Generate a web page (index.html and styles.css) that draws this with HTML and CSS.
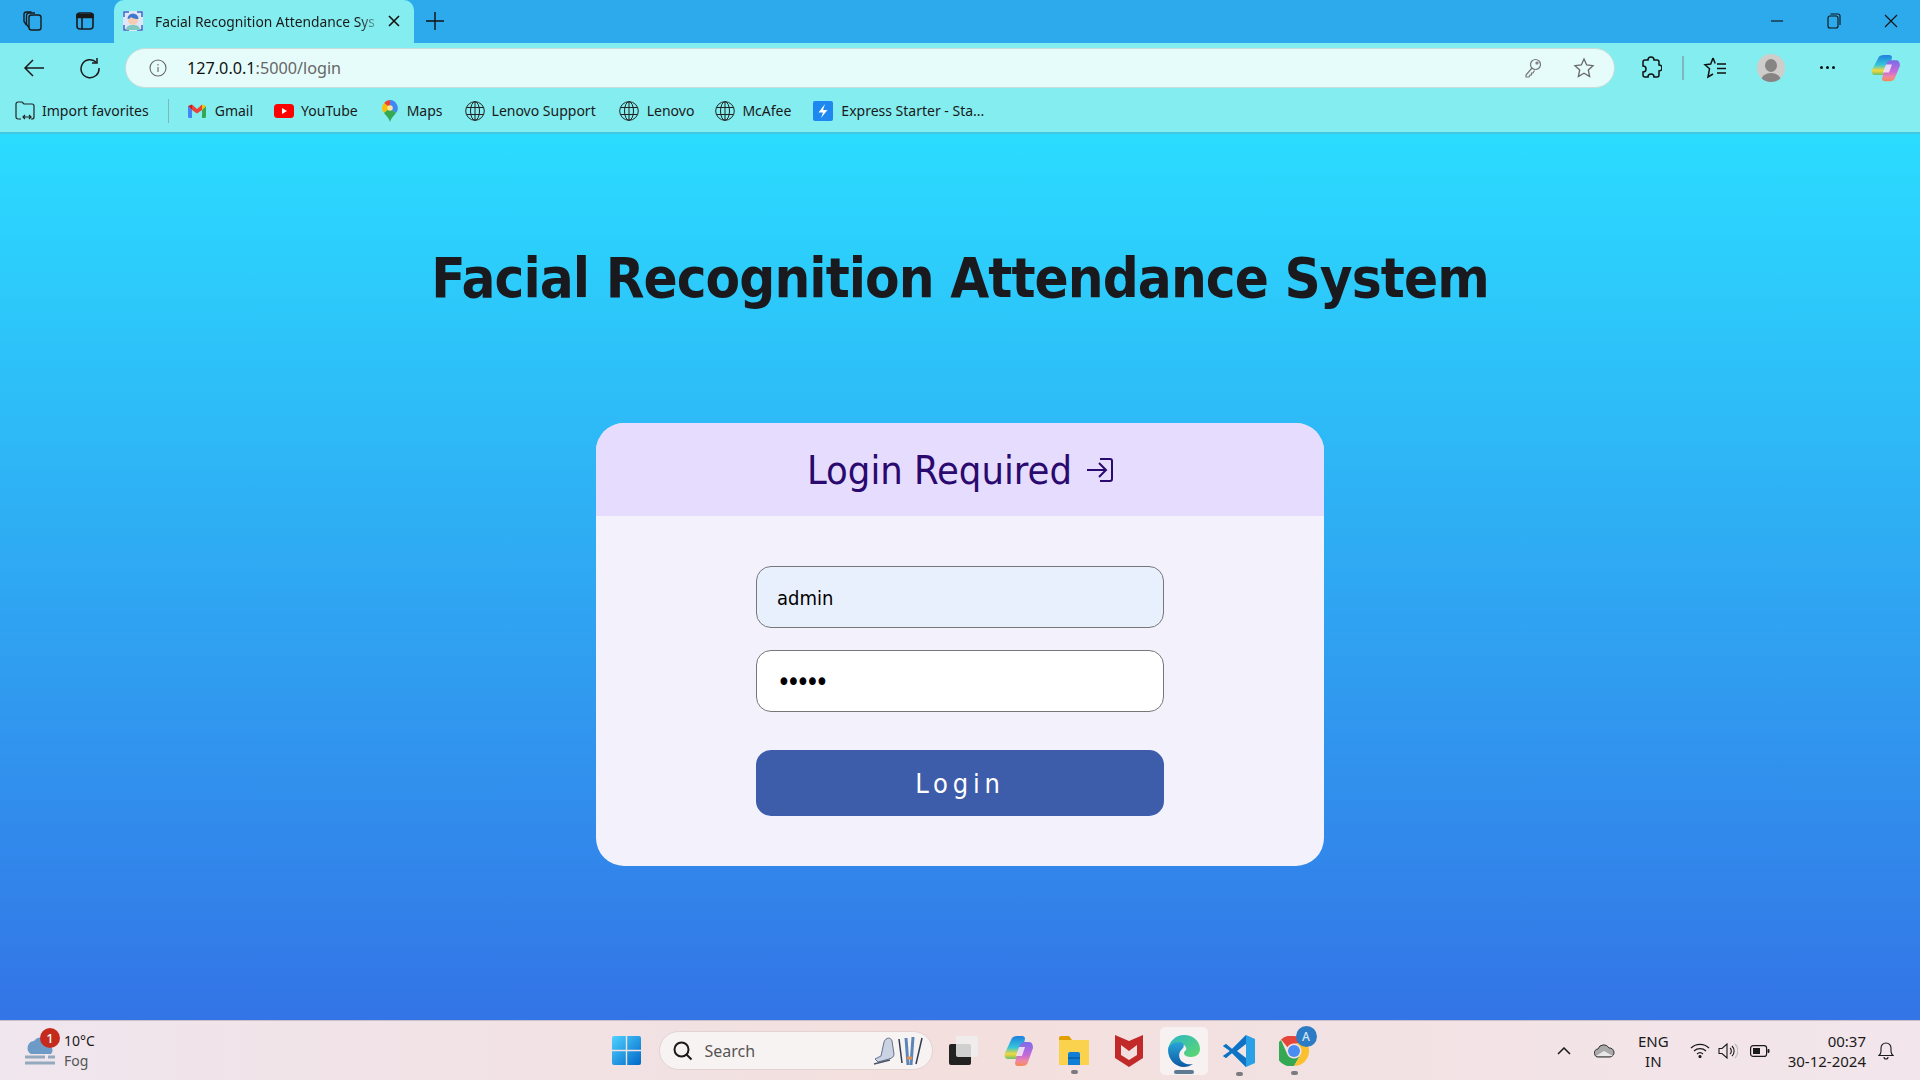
FILE: index.html
```html
<!DOCTYPE html>
<html lang="en">
<head>
  <meta charset="UTF-8">
  <title>Facial Recognition Attendance System</title>
  <link rel="stylesheet" href="styles.css">
</head>
<body>
  <div class="tabstrip">
    <div class="strip-icons">
      <svg class="ic" width="22" height="22" viewBox="0 0 22 22" fill="none" stroke="#1a1a1a" stroke-width="1.4"><rect x="8" y="5" width="12" height="15" rx="2.5"/><path d="M8 17.500 5.500 14.500V5.500A2.500 2.500 0 0 1 8 3h6"/><path d="M5.500 15 3 11.500V4.500A2.500 2.500 0 0 1 5.500 2h5"/></svg>
      <svg class="ic" width="22" height="22" viewBox="0 0 22 22" fill="none" stroke="#1a1a1a" stroke-width="1.6"><rect x="3" y="3" width="16" height="16" rx="3"/><path d="M3 4.500h16v3H3z" fill="#1a1a1a"/><path d="M8 7v12"/></svg>
    </div>
    <div class="tab">
      <svg class="favicon" width="20" height="20" viewBox="0 0 20 20" fill="none"><rect width="20" height="20" fill="#dfe6f8"/><path d="M1 6V1h5M14 1h5v5M19 14v5h-5M6 19H1v-5" stroke="#3f64c8" stroke-width="1.500"/><circle cx="10" cy="9" r="5" fill="#f4cdb4"/><path d="M4.500 8a5.500 5.500 0 0 1 11 0c-3 0-6-.5-7.500-2-.5 1-2 2-3.500 2z" fill="#3f78cc"/><path d="M3 19c0-4 3-5 7-5s7 1 7 5z" fill="#7fc9c0"/></svg>
      <span class="tab-title">Facial Recognition Attendance Sys</span>
      <svg width="14" height="14" viewBox="0 0 14 14" stroke="#111" stroke-width="1.6"><path d="M2 2l10 10M12 2 2 12"/></svg>
    </div>
    <svg class="newtab" width="20" height="20" viewBox="0 0 20 20" stroke="#111" stroke-width="1.4"><path d="M10 1v18M1 10h18"/></svg>
    <div class="winctl">
      <svg width="14" height="14" viewBox="0 0 14 14" stroke="#111" stroke-width="1.1"><path d="M1 7h12"/></svg>
      <svg width="14" height="16" viewBox="0 0 14 16" fill="none" stroke="#111" stroke-width="1.1"><rect x="1" y="3" width="10" height="12" rx="2"/><path d="M3.500 1H11a2 2 0 0 1 2 2v9"/></svg>
      <svg width="14" height="14" viewBox="0 0 14 14" stroke="#111" stroke-width="1.1"><path d="M1 1l12 12M13 1 1 13"/></svg>
    </div>
  </div>

  <div class="toolbar">
    <svg class="tb-back" width="22" height="20" viewBox="0 0 22 20" fill="none" stroke="#1a1a1a" stroke-width="1.5"><path d="M21 10H2M10 2l-8 8 8 8"/></svg>
    <svg class="tb-reload" width="22" height="22" viewBox="0 0 22 22" fill="none" stroke="#1a1a1a" stroke-width="1.5"><path d="M17.500 5.500A9 9 0 1 0 20 11"/><path d="M18 1v5h-5"/></svg>
    <div class="addressbar">
      <svg width="18" height="18" viewBox="0 0 18 18" fill="none" stroke="#666" stroke-width="1.1"><circle cx="9" cy="9" r="8"/><path d="M9 8v5M9 5v1.400"/></svg>
      <span class="url"><b>127.0.0.1</b>:5000/login</span>
      <svg class="addr-key" width="18" height="20" viewBox="0 0 18 20" fill="none" stroke="#777" stroke-width="1.2"><circle cx="11.500" cy="6.500" r="5"/><path d="M8 10 2 17v2h3l1-2h1.500v-2h1.500l1.500-2.500"/><circle cx="13" cy="5" r="1"/></svg>
      <svg class="addr-star" width="22" height="22" viewBox="0 0 22 22" fill="none" stroke="#666" stroke-width="1.3"><path d="M11 2l2.700 6 6.300.7-4.700 4.300 1.300 6.500L11 16.200 5.400 19.500 6.700 13 2 8.700 8.300 8z"/></svg>
    </div>
    <svg class="tb-ext" width="22" height="24" viewBox="0 0 22 24" fill="none" stroke="#111" stroke-width="1.5"><path d="M8 4a3 3 0 0 1 6 0h3a2 2 0 0 1 2 2v3a3 3 0 0 1 0 6v4a2 2 0 0 1-2 2h-3a3 3 0 0 0-6 0H5a2 2 0 0 1-2-2v-3a3 3 0 0 0 0-6V6a2 2 0 0 1 2-2z"/></svg>
    <span class="tb-sep"></span>
    <svg class="tb-favs" width="24" height="24" viewBox="0 0 24 24" fill="none" stroke="#111" stroke-width="1.5"><path d="M10 2 7.700 8 2 8.800l4.500 4L5 21l5-3M10 2l2.200 5.500"/><path d="M14 8h9M14 12.500h9M14 17h9"/></svg>
    <span class="avatar"><i class="avatar-head"></i><i class="avatar-body"></i></span>
    <span class="tb-dots"><i></i><i></i><i></i></span>
    <svg class="tb-copilot" width="30" height="28" viewBox="0 0 30 32" preserveAspectRatio="none">
      <defs>
        <linearGradient id="cpa" x1="0" y1="0" x2="0" y2="1"><stop offset="0" stop-color="#1f7fe0"/><stop offset=".5" stop-color="#34c6d8"/><stop offset=".78" stop-color="#f4d83c"/><stop offset="1" stop-color="#6cc070"/></linearGradient>
        <linearGradient id="cpb" x1="0" y1="0" x2="0" y2="1"><stop offset="0" stop-color="#7a6bea"/><stop offset=".55" stop-color="#c66ad8"/><stop offset=".8" stop-color="#f088a0"/><stop offset="1" stop-color="#f48a50"/></linearGradient>
      </defs>
      <path d="M13 1h5c2 0 3 1 3 3l-4 17c-.6 2-2 3-4 3H4c-3 0-4-3-3-6l6-13c1-3 3-4 6-4z" fill="url(#cpa)"/>
      <path d="M21 7h4c3 0 4 3 4 6l-5 14c-1 3-3 4-6 4h-4c-2 0-3-1-3-3l4-16c.6-3 3-5 6-5z" fill="url(#cpb)"/>
      <path d="M15 12h6l-3 9h-6z" fill="#fff" opacity=".75"/>
    </svg>
  </div>

  <div class="favbar">
    <span class="fav fav-import">
      <svg width="21" height="20" viewBox="0 0 21 20" fill="none" stroke="#222" stroke-width="1.2"><path d="M6 18H3a2 2 0 0 1-2-2V3a2 2 0 0 1 2-2h4l2 2h8a2 2 0 0 1 2 2v11a2 2 0 0 1-2 2h-1"/><path d="M8 16h8M10 14l-2 2 2 2M14 14l2 2-2 2"/></svg>
      Import favorites
    </span>
    <span class="fav-sep"></span>
    <span class="fav fav-gmail">
      <svg width="18" height="14" viewBox="0 0 18 14"><path d="M0 2v10.500A1.500 1.500 0 0 0 1.500 14H4V6z" fill="#4285f4"/><path d="M18 2v10.500a1.500 1.500 0 0 1-1.500 1.500H14V6z" fill="#34a853"/><path d="M0 2 4 .5V6z" fill="#c5221f"/><path d="M4 .5 9 5l5-4.500V6L9 9.500 4 6z" fill="#ea4335"/><path d="M14 .5 18 2l-4 4z" fill="#fbbc04"/></svg>
      Gmail
    </span>
    <span class="fav fav-yt">
      <svg width="20" height="14" viewBox="0 0 20 14"><rect width="20" height="14" rx="3.500" fill="#f00"/><path d="M8 4l5 3-5 3z" fill="#fff"/></svg>
      YouTube
    </span>
    <span class="fav fav-maps">
      <svg width="16" height="22" viewBox="0 0 16 22"><path d="M8 0a8 8 0 0 1 6 13L8 8z" fill="#4285f4"/><path d="M8 0a8 8 0 0 0-6 3l6 5z" fill="#ea4335"/><path d="M2 3a8 8 0 0 0 0 10l6-5z" fill="#fbbc04"/><path d="M2 13l6-5 6 5c-2 2.500-5 5-6 9-1-4-4-6.500-6-9z" fill="#34a853"/><circle cx="8" cy="8" r="2.800" fill="#f6e7a0"/></svg>
      Maps
    </span>
    <span class="fav fav-lensup">
      <svg width="20" height="20" viewBox="0 0 20 20" fill="none" stroke="#222" stroke-width="1"><circle cx="10" cy="10" r="9.300"/><ellipse cx="10" cy="10" rx="4.500" ry="9.300"/><path d="M1.500 6.500h17M1.500 13.500h17M10 .7v18.600"/></svg>
      Lenovo Support
    </span>
    <span class="fav fav-len">
      <svg width="20" height="20" viewBox="0 0 20 20" fill="none" stroke="#222" stroke-width="1"><circle cx="10" cy="10" r="9.300"/><ellipse cx="10" cy="10" rx="4.500" ry="9.300"/><path d="M1.500 6.500h17M1.500 13.500h17M10 .7v18.600"/></svg>
      Lenovo
    </span>
    <span class="fav fav-mca">
      <svg width="20" height="20" viewBox="0 0 20 20" fill="none" stroke="#222" stroke-width="1"><circle cx="10" cy="10" r="9.300"/><ellipse cx="10" cy="10" rx="4.500" ry="9.300"/><path d="M1.500 6.500h17M1.500 13.500h17M10 .7v18.600"/></svg>
      McAfee
    </span>
    <span class="fav fav-exp">
      <svg width="20" height="20" viewBox="0 0 20 20"><rect width="20" height="20" rx="2" fill="#1e88f0"/><path d="M12 3 5.500 11.500H10L8 17l6.500-8H10z" fill="#fff"/></svg>
      Express Starter - Sta...
    </span>
  </div>

  <main class="page">
    <h1 class="page-title">Facial Recognition Attendance System</h1>
    <section class="card">
      <div class="card-head">
        <h2 class="card-title">Login Required</h2>
        <svg width="26" height="24" viewBox="0 0 26 24" fill="none" stroke="#2a0a6e" stroke-width="2"><path d="M13 1h10a2 2 0 0 1 2 2v18a2 2 0 0 1-2 2H13"/><path d="M0 12h18M12 5l7 7-7 7"/></svg>
      </div>
      <form class="card-form">
        <input class="field field-user" type="text" value="admin">
        <input class="field field-pass" type="password" value="admin">
        <button class="btn-login" type="button">Login</button>
      </form>
    </section>
  </main>

  <footer class="taskbar">
    <div class="weather">
      <span class="weather-icon">
        <svg width="32" height="32" viewBox="0 0 32 32"><path d="M7 19a7 7 0 0 1 3-13 9 9 0 0 1 16 5 5 5 0 0 1 1 8z" fill="#6d9ac6"/><path d="M1 22h20M24 22h7" stroke="#94a9be" stroke-width="3"/><path d="M1 28h30" stroke="#94a9be" stroke-width="3"/></svg>
        <b class="weather-badge">1</b>
      </span>
      <div class="weather-text"><span>10°C</span><span class="muted">Fog</span></div>
    </div>

    <div class="task-center">
      <svg class="task-start" width="29" height="29" viewBox="0 0 29 29">
        <defs><linearGradient id="win" x1="0" y1="0" x2="1" y2="1"><stop offset="0" stop-color="#4fd2ff"/><stop offset="1" stop-color="#0067c8"/></linearGradient></defs>
        <path d="M2 0h11.800v13.800H0V2a2 2 0 0 1 2-2zM15.200 0H27a2 2 0 0 1 2 2v11.800H15.200zM0 15.200h13.800V29H2a2 2 0 0 1-2-2zM15.200 15.200H29V27a2 2 0 0 1-2 2H15.200z" fill="url(#win)"/>
      </svg>
      <div class="task-search">
        <svg width="20" height="20" viewBox="0 0 20 20" fill="none" stroke="#1a1a1a" stroke-width="2"><circle cx="8.500" cy="8.500" r="7"/><path d="M13.500 13.500l5 5"/></svg>
        <span class="search-label">Search</span>
        <svg class="search-pic" width="52" height="34" viewBox="0 0 52 34" fill="none"><path d="M3 25l6-3 3-14c2-5 7-5 8-1l2 13c0 3-2 4-5 5l-11 3z" fill="#c9d3e4" stroke="#66718a"/><path d="M2 30l16-4" stroke="#4a5468" stroke-width="1.500"/><path d="M27 5l3 24" stroke="#333d52" stroke-width="1.500"/><path d="M34 4l2 27" stroke="#5d86b8" stroke-width="3"/><path d="M41 3l-2 28" stroke="#5d86b8" stroke-width="3"/><path d="M50 4l-6 26" stroke="#333d52" stroke-width="1.500"/><path d="M35 24h5" stroke="#e09050" stroke-width="3"/></svg>
      </div>
      <span class="task-view"><i class="tv-back"></i><i class="tv-front"></i></span>
      <svg class="task-app app-copilot" width="30" height="32" viewBox="0 0 30 32">
        <path d="M13 1h5c2 0 3 1 3 3l-4 17c-.6 2-2 3-4 3H4c-3 0-4-3-3-6l6-13c1-3 3-4 6-4z" fill="url(#cpa)"/>
        <path d="M21 7h4c3 0 4 3 4 6l-5 14c-1 3-3 4-6 4h-4c-2 0-3-1-3-3l4-16c.6-3 3-5 6-5z" fill="url(#cpb)"/>
        <path d="M15 12h6l-3 9h-6z" fill="#fff" opacity=".75"/>
      </svg>
      <span class="task-app app-files">
        <svg width="30" height="29" viewBox="0 0 30 29"><path d="M0 2a2 2 0 0 1 2-2h8l3 4h-13z" fill="#e0a000"/><path d="M0 4h30v25H0z" fill="#fbd24e"/><path d="M9 18a2 2 0 0 1 2-2h8a2 2 0 0 1 2 2v11H9z" fill="#0f7ed6"/><path d="M9 22h12" stroke="#0a5ca0" stroke-width="1.500"/></svg>
        <i class="run-dot"></i>
      </span>
      <svg class="task-app app-mcafee" width="28" height="32" viewBox="0 0 28 32"><path d="M0 0l14 6 14-6v23L14 32 0 23z" fill="#c22a2a"/><path d="M6 10l8 6 8-6v10l-8 5-8-5z" fill="#f3dfdd"/></svg>
      <span class="task-active">
        <svg width="32" height="32" viewBox="0 0 32 32">
          <defs>
            <linearGradient id="edb" x1="0" y1="0" x2="0" y2="1"><stop offset="0" stop-color="#2ba6d8"/><stop offset="1" stop-color="#0c59a4"/></linearGradient>
            <linearGradient id="edg" x1="0" y1="0" x2="1" y2="1"><stop offset="0" stop-color="#2bb6c8"/><stop offset="1" stop-color="#5fd86c"/></linearGradient>
          </defs>
          <path d="M0 15C1 6 8 0 16 0c9 0 16 6 16 14 0 5-4 8-9 8-3 0-7-1-7-4 0-1 1-2 2-3 1-2-1-6-6-6-6 0-12 3-12 6z" fill="url(#edg)"/>
          <path d="M0 15c0-5 6-8 11-8 4 0 6 3 4 6-3 3-5 6-3 11 2 4 7 6 13 5-3 2-6 3-9 3C7 32 0 24 0 15z" fill="url(#edb)"/>
        </svg>
        <i class="run-bar"></i>
      </span>
      <span class="task-app app-code">
        <svg width="32" height="32" viewBox="0 0 32 32"><path d="M23 0l9 4v24l-9 4L9 18l-6 5-3-2 7-5-7-5 3-2 6 5z" fill="#2aa0e6"/><path d="M23 0v32L9 18l-6 5-3-2 7-5-7-5 3-2 6 5z" fill="#0f72c4"/><path d="M23 9v14l-9-7z" fill="#f0e6e6"/></svg>
        <i class="run-dot"></i>
      </span>
      <span class="task-app app-chrome">
        <svg width="30" height="30" viewBox="0 0 30 30"><path d="M15 0a15 15 0 0 1 13 7.500H15a7.500 7.500 0 0 0-6.500 3.700L2 3.500A15 15 0 0 1 15 0z" fill="#e6463a"/><path d="M2 4A15 15 0 0 0 15 30l6.500-11.300a7.500 7.500 0 0 1-13 0z" fill="#34a853"/><path d="M28 7.500A15 15 0 0 1 15 30l6.500-11.300A7.500 7.500 0 0 0 15 7.500z" fill="#fbc02d"/><circle cx="15" cy="15" r="6" fill="#4a8df0"/></svg>
        <b class="chrome-badge">A</b>
        <i class="run-dot"></i>
      </span>
    </div>

    <div class="tray">
      <svg class="tray-chevron" width="14" height="8" viewBox="0 0 14 8" fill="none" stroke="#1a1a1a" stroke-width="1.500"><path d="M1 7l6-6 6 6"/></svg>
      <svg class="tray-cloud" width="21" height="15" viewBox="0 0 21 15"><path d="M5 14a4 4 0 0 1-1-8 6 6 0 0 1 11-1 4.500 4.500 0 0 1 1 9z" fill="#a9a9a9" stroke="#333"/><path d="M2 13l8-5 9 5z" fill="#e8e8e8"/></svg>
      <div class="tray-lang"><span>ENG</span><span>IN</span></div>
      <svg class="tray-wifi" width="20" height="15" viewBox="0 0 20 15" fill="none" stroke="#1a1a1a" stroke-width="1.200"><path d="M1 5a13 13 0 0 1 18 0M4 8a9 9 0 0 1 12 0M7 11a4.500 4.500 0 0 1 6 0"/><circle cx="10" cy="13.500" r="1" fill="#1a1a1a"/></svg>
      <svg class="tray-vol" width="20" height="16" viewBox="0 0 20 16" fill="none" stroke="#1a1a1a" stroke-width="1.100"><path d="M1 5.500h3L9 1v14l-5-4.500H1z"/><path d="M12 5a4 4 0 0 1 0 6M14 3a7 7 0 0 1 0 10"/><path d="M17 1a10 10 0 0 1 0 14" stroke="#bbb"/></svg>
      <svg class="tray-bat" width="20" height="12" viewBox="0 0 20 12"><rect x=".6" y=".6" width="16" height="10.800" rx="2.500" fill="none" stroke="#1a1a1a" stroke-width="1.200"/><rect x="3" y="3" width="7" height="6" fill="#1a1a1a"/><rect x="17.500" y="4" width="2" height="4" rx="1" fill="#1a1a1a"/></svg>
      <div class="tray-clock"><span>00:37</span><span>30-12-2024</span></div>
      <svg class="tray-bell" width="16" height="18" viewBox="0 0 16 18" fill="none" stroke="#1a1a1a" stroke-width="1.100"><path d="M1 13.500c1-1 2-2 2-4V6a5 5 0 0 1 10 0v3.500c0 2 1 3 2 4z"/><path d="M6 15a2 2 0 0 0 4 0"/></svg>
    </div>
  </footer>
</body>
</html>
```

FILE: styles.css
```css
* {
  box-sizing: border-box;
}

html, body {
  margin: 0;
  height: 100%;
  overflow: hidden;
}

body {
  display: flex;
  flex-direction: column;
  width: 1920px;
  height: 1080px;
  font-family: "Noto Sans", "Open Sans", sans-serif;
  color: #1a1a1a;
}

svg {
  display: block;
  flex: none;
}

/* browser chrome */
.tabstrip {
  display: flex;
  align-items: flex-start;
  height: 43px;
  background: #2caaec;
  flex: none;
}

.strip-icons {
  display: flex;
  gap: 31px;
  padding: 10px 0 0 21px;
  width: 114px;
}

.tab {
  display: flex;
  align-items: center;
  width: 300px;
  height: 43px;
  padding: 0 13px 1px 9px;
  background: #84edf0;
  border-radius: 10px 10px 0 0;
}

.tab-title {
  flex: 1;
  margin-left: 12px;
  font-size: 13.8px;
  white-space: nowrap;
  overflow: hidden;
  -webkit-mask-image: linear-gradient(90deg, #000 88%, transparent 98%);
}

.newtab {
  margin: 11px 0 0 11px;
}

.winctl {
  display: flex;
  align-items: center;
  gap: 43px;
  margin-left: auto;
  padding: 13px 22px 0 0;
}

.toolbar {
  display: flex;
  align-items: center;
  height: 46px;
  padding-top: 3px;
  background: #84edf0;
  flex: none;
}

.tb-back {
  margin-left: 23px;
}

.tb-reload {
  margin-left: 34px;
}

.addressbar {
  display: flex;
  align-items: center;
  width: 1490px;
  height: 40px;
  margin-left: 24px;
  padding: 0 19px 0 23px;
  background: #e6fcfb;
  border: 1px solid #c8dcdc;
  border-radius: 20px;
}

.url {
  margin-left: 20px;
  font-size: 16.2px;
  color: #666;
}

.url b {
  font-weight: 400;
  color: #111;
}

.addr-key {
  margin-left: auto;
}

.addr-star {
  margin-left: 31px;
}

.tb-ext {
  margin-left: 25px;
}

.tb-sep {
  width: 2px;
  height: 24px;
  margin-left: 20px;
  background: #7fb6bb;
}

.tb-favs {
  margin-left: 19px;
}

.avatar {
  position: relative;
  width: 28px;
  height: 28px;
  margin-left: 30px;
  border-radius: 50%;
  background: #cfcdca;
  overflow: hidden;
  flex: none;
}

.avatar-head {
  position: absolute;
  left: 8px;
  top: 5px;
  width: 12px;
  height: 13px;
  border-radius: 50%;
  background: #868583;
}

.avatar-body {
  position: absolute;
  left: 4px;
  top: 19px;
  width: 20px;
  height: 16px;
  border-radius: 50%;
  background: #868583;
}

.tb-dots {
  display: flex;
  gap: 3px;
  margin-left: 35px;
}

.tb-dots i {
  width: 3px;
  height: 3px;
  border-radius: 50%;
  background: #111;
}

.tb-copilot {
  margin-left: 36px;
}

.favbar {
  display: flex;
  align-items: center;
  height: 45px;
  padding-left: 15px;
  background: #84edf0;
  border-bottom: 2px solid #3fc8e0;
  font-size: 14px;
  flex: none;
}

.fav {
  display: flex;
  align-items: center;
  gap: 8px;
  white-space: nowrap;
}

.fav-import { gap: 6px; }
.fav-gmail { gap: 9px; }
.fav-maps { gap: 9px; }
.fav-yt,
.fav-lensup,
.fav-mca { gap: 7px; }

.fav-sep {
  width: 1px;
  height: 24px;
  margin: 0 19px;
  background: #7fb6bb;
}

.fav-yt { margin-left: 21px; }
.fav-maps { margin-left: 24px; }
.fav-lensup { margin-left: 22px; }
.fav-len { margin-left: 23px; }
.fav-mca { margin-left: 21px; }
.fav-exp { margin-left: 22px; }

/* page */
.page {
  flex: 1;
  display: flex;
  flex-direction: column;
  align-items: center;
  background: linear-gradient(180deg, #2bdcff, #3374e6);
}

.page-title {
  margin: 103px 0 0;
  height: 82px;
  font-family: "DejaVu Sans", Verdana, sans-serif;
  font-stretch: condensed;
  font-size: 56px;
  font-weight: 700;
  letter-spacing: -.95px;
  line-height: 82px;
  color: #1a1a1e;
  white-space: nowrap;
}

.card {
  width: 728px;
  height: 443px;
  margin-top: 104px;
  background: #f3f1fc;
  border-radius: 28px;
  overflow: hidden;
}

.card-head {
  display: flex;
  align-items: center;
  justify-content: center;
  gap: 15px;
  height: 93px;
  padding-top: 1px;
  background: #e6dcfe;
}

.card-title {
  margin: 0;
  font-family: "DejaVu Sans", Verdana, sans-serif;
  font-stretch: condensed;
  font-size: 39.5px;
  font-weight: 400;
  color: #2a0a6e;
}

.card-form {
  display: flex;
  flex-direction: column;
  align-items: center;
  padding-top: 50px;
}

.field {
  width: 408px;
  height: 62px;
  margin-bottom: 22px;
  padding: 2px 20px 0;
  border: 1px solid #777;
  border-radius: 15px;
  background: #fff;
  font-family: "DejaVu Sans", Verdana, sans-serif;
  font-stretch: condensed;
  font-size: 20px;
  color: #000;
  outline: none;
}

.field-user {
  background: #e8f0fe;
}

.field-pass {
  font-size: 26px;
  letter-spacing: -4.3px;
}

.btn-login {
  width: 408px;
  height: 66px;
  margin-top: 16px;
  border: 0;
  border-radius: 15px;
  background: #3d5caa;
  color: #fff;
  font-family: "DejaVu Sans", Verdana, sans-serif;
  font-stretch: condensed;
  font-size: 27px;
  letter-spacing: 4.8px;
}

/* taskbar */
.taskbar {
  display: grid;
  grid-template-columns: 1fr auto 1fr;
  align-items: center;
  height: 60px;
  background: linear-gradient(90deg, #f0e6ee, #f3dfdd 50%, #f2e6ec);
  border-top: 1px solid #c9bfc6;
  flex: none;
}

.weather {
  display: flex;
  align-items: center;
  gap: 8px;
  padding-left: 24px;
}

.weather-icon {
  position: relative;
  display: block;
}

.weather-badge {
  position: absolute;
  top: -7px;
  right: -4px;
  width: 20px;
  height: 20px;
  border-radius: 50%;
  background: #c42b1c;
  color: #fff;
  font-size: 13px;
  font-weight: 500;
  line-height: 20px;
  text-align: center;
}

.weather-text,
.tray-lang,
.tray-clock {
  display: flex;
  flex-direction: column;
  font-size: 14px;
  line-height: 20px;
}

.tray-lang,
.tray-clock {
  font-size: 15px;
}

.muted {
  color: #555;
}

.task-center {
  display: flex;
  align-items: center;
}

.task-search {
  display: flex;
  align-items: center;
  width: 274px;
  height: 39px;
  margin-left: 18px;
  padding: 0 8px 0 13px;
  background: #f8f3f3;
  border: 1px solid #e2d2d2;
  border-radius: 20px;
}

.search-label {
  margin-left: 12px;
  font-size: 16px;
  color: #555;
}

.search-pic {
  margin-left: auto;
}

.task-view {
  position: relative;
  display: block;
  width: 29px;
  height: 29px;
  margin-left: 16px;
  flex: none;
}

.tv-back {
  position: absolute;
  left: 0;
  bottom: 0;
  width: 22px;
  height: 21px;
  background: #222;
  border-radius: 2px;
}

.tv-front {
  position: absolute;
  right: 0;
  top: 0;
  width: 22px;
  height: 21px;
  background: rgba(240, 238, 238, .85);
  border-radius: 2px;
}

.task-app {
  position: relative;
  display: block;
  flex: none;
}

.app-copilot { margin-left: 26px; }
.app-files { margin-left: 25px; }
.app-mcafee { margin-left: 26px; }
.app-code { margin-left: 15px; }
.app-chrome { margin-left: 24px; }

.run-dot {
  position: absolute;
  left: 50%;
  bottom: -9px;
  width: 7px;
  height: 4px;
  margin-left: -3px;
  border-radius: 2px;
  background: #7a7a80;
}

.task-active {
  position: relative;
  display: flex;
  align-items: center;
  justify-content: center;
  width: 48px;
  height: 48px;
  margin-left: 17px;
  background: #f7f1f1;
  border-radius: 5px;
  flex: none;
}

.run-bar {
  position: absolute;
  left: 14px;
  bottom: 1px;
  width: 20px;
  height: 4px;
  border-radius: 2px;
  background: #5e7a90;
}

.chrome-badge {
  position: absolute;
  top: -10px;
  right: -8px;
  width: 21px;
  height: 21px;
  border-radius: 50%;
  background: #2b7cc4;
  color: #cfe6fa;
  font-size: 12px;
  font-weight: 500;
  line-height: 21px;
  text-align: center;
}

.tray {
  display: flex;
  align-items: center;
  justify-content: flex-end;
  padding-right: 26px;
}

.tray-lang {
  align-items: center;
  margin-left: 23px;
}

.tray-cloud { margin-left: 23px; }
.tray-wifi { margin-left: 21px; }
.tray-vol { margin-left: 8px; }
.tray-bat { margin-left: 12px; }

.tray-clock {
  align-items: flex-end;
  margin-left: 18px;
}

.tray-bell {
  margin-left: 12px;
}
```
